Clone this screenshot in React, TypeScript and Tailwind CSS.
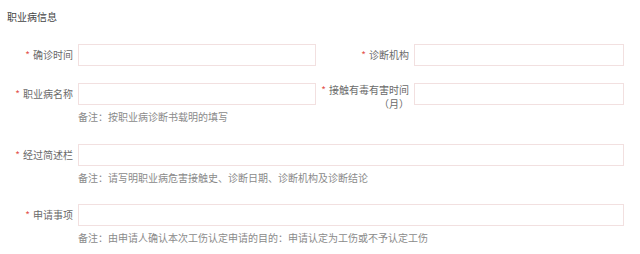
const font = { fontFamily: '"Noto Sans CJK SC", "Liberation Sans", sans-serif' };

function Label({ children, className = "" }: { children: React.ReactNode; className?: string }) {
  return (
    <div className={`shrink-0 text-right text-[10px] leading-[13px] text-[#6a6a6a] ${className}`}>
      <span className="text-[#e4534f] mr-[3px]">*</span>
      {children}
    </div>
  );
}

function Input({ className = "" }: { className?: string }) {
  return <div className={`shrink-0 h-[22px] border border-[#f2e0e0] bg-white ${className}`} />;
}

function Note({ children }: { children: React.ReactNode }) {
  return <div className="ml-[78px] mt-[6px] text-[10px] leading-[12px] text-[#8a8a8a]">{children}</div>;
}

export default function App() {
  return (
    <div className="w-[640px] h-[254px] bg-white overflow-hidden" style={font}>
      <div className="pl-[7px] pt-[10px] text-[10px] leading-[14px] text-[#444]">职业病信息</div>

      <div className="mt-[20px] flex items-start h-[22px]">
        <Label className="w-[73px] pt-[4px]">确诊时间</Label>
        <Input className="ml-[5px] w-[238px]" />
        <Label className="w-[93px] pt-[4px]">诊断机构</Label>
        <Input className="ml-[5px] w-[210px]" />
      </div>

      <div className="mt-[17px] flex items-start h-[22px]">
        <Label className="w-[73px] pt-[4px]">职业病名称</Label>
        <Input className="ml-[5px] w-[238px]" />
        <div className="shrink-0 w-[93px] text-right text-[10px] leading-[14px] text-[#6a6a6a]">
          <div>
            <span className="text-[#e4534f] mr-[3px]">*</span>接触有毒有害时间
          </div>
          <div>（月）</div>
        </div>
        <Input className="ml-[5px] w-[210px]" />
      </div>
      <Note>备注：按职业病诊断书载明的填写</Note>

      <div className="mt-[21px] flex items-start h-[22px]">
        <Label className="w-[73px] pt-[4px]">经过简述栏</Label>
        <Input className="ml-[5px] w-[546px]" />
      </div>
      <Note>备注：请写明职业病危害接触史、诊断日期、诊断机构及诊断结论</Note>

      <div className="mt-[20px] flex items-start h-[22px]">
        <Label className="w-[73px] pt-[4px]">申请事项</Label>
        <Input className="ml-[5px] w-[546px]" />
      </div>
      <Note>备注：由申请人确认本次工伤认定申请的目的：申请认定为工伤或不予认定工伤</Note>
    </div>
  );
}
